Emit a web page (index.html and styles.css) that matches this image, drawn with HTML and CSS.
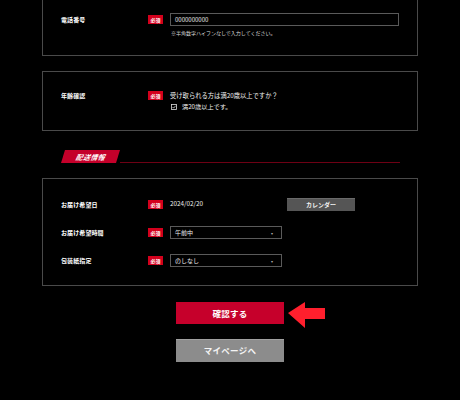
FILE: index.html
```html
<!DOCTYPE html>
<html lang="ja">
<head>
<meta charset="utf-8">
<link rel="stylesheet" href="styles.css">
</head>
<body>
<div class="page">
  <div class="box box-first">
    <div class="row">
      <div class="label">電話番号</div>
      <span class="badge">必須</span>
      <div class="field">
        <div class="input wide">0000000000</div>
        <div class="note">※半角数字ハイフンなしで入力してください。</div>
      </div>
    </div>
  </div>

  <div class="box box-age">
    <div class="row row-top">
      <div class="label">年齢確認</div>
      <span class="badge">必須</span>
      <div class="field">
        <div class="question">受け取られる方は満20歳以上ですか？</div>
        <div class="check"><span class="checkbox"><svg viewBox="0 0 6 6" width="6" height="6"><rect x="0.5" y="0.5" width="5" height="5" fill="none" stroke="#ddd" stroke-width="0.8"/><path d="M1.5 3 L2.6 4.1 L4.6 1.8" fill="none" stroke="#ddd" stroke-width="0.8"/></svg></span>満20歳以上です。</div>
      </div>
    </div>
  </div>

  <div class="section-head">
    <span class="tag"><span class="tag-text">配送情報</span></span>
    <span class="rule"></span>
  </div>

  <div class="box box-delivery">
    <div class="row">
      <div class="label">お届け希望日</div>
      <span class="badge">必須</span>
      <div class="field date-field">
        <span class="date">2024/02/20</span>
        <span class="cal-btn">カレンダー</span>
      </div>
    </div>
    <div class="row">
      <div class="label">お届け希望時間</div>
      <span class="badge">必須</span>
      <div class="field">
        <div class="select"><span>午前中</span><span class="caret">▾</span></div>
      </div>
    </div>
    <div class="row">
      <div class="label">包装紙指定</div>
      <span class="badge">必須</span>
      <div class="field">
        <div class="select"><span>のしなし</span><span class="caret">▾</span></div>
      </div>
    </div>
  </div>

  <div class="actions">
    <div class="confirm-wrap">
      <div class="btn btn-confirm">確認する</div>
      <svg class="arrow" viewBox="0 0 38 26" width="38" height="26"><polygon points="0,11 17,0 17,6 37,6 37,17 17,17 17,26" fill="#ff1f2d"/></svg>
    </div>
    <div class="btn btn-mypage">マイページへ</div>
  </div>
</div>
</body>
</html>
```

FILE: styles.css
```css
html, body {
  margin: 0;
  padding: 0;
  background: #000;
}
body {
  font-family: "Noto Sans CJK JP", "Noto Sans", sans-serif;
  color: #fff;
  width: 460px;
  height: 400px;
  overflow: hidden;
}
.page {
  width: 376px;
  margin: -21px auto 0;
}
.box {
  border: 1px solid #4a4a4a;
  box-sizing: border-box;
  padding: 0 18px;
}
.box-first {
  height: 77px;
  padding-top: 33px;
}
.box-age {
  margin-top: 15px;
  height: 60px;
  padding-top: 19px;
}
.box-delivery {
  margin-top: 15px;
  height: 108px;
  padding-top: 19px;
  display: flex;
  flex-direction: column;
  gap: 15px;
}
.row {
  display: grid;
  grid-template-columns: 87px 15px 1fr;
  align-items: start;
}
.field {
  padding-left: 7px;
}
.box-delivery .row {
  align-items: center;
  height: 13px;
}
.label {
  font-size: 6px;
  font-weight: 700;
  line-height: 13px;
  letter-spacing: 0.1px;
}
.box-age .label {
  line-height: 8px;
  padding-top: 1px;
}
.badge {
  display: block;
  width: 15px;
  height: 9px;
  margin-top: 2px;
  background: #d3001c;
  color: #fff;
  font-size: 5px;
  font-weight: 700;
  line-height: 9px;
  text-align: center;
}
.box-age .badge {
  margin-top: 0;
}
.box-delivery .badge {
  margin-top: 0;
}
.input {
  height: 13px;
  border: 1px solid #5a5a5a;
  box-sizing: border-box;
  background: #000;
  font-size: 6px;
  line-height: 11px;
  padding-left: 4px;
  color: #e8e8e8;
}
.wide {
  width: 229px;
}
.note {
  margin-top: 3px;
  font-size: 5px;
  line-height: 7px;
  color: #ddd;
  padding-left: 1px;
}
.question {
  font-size: 6.3px;
  line-height: 9px;
  color: #f0f0f0;
}
.check {
  margin-top: 2px;
  font-size: 6.2px;
  line-height: 9px;
  color: #f0f0f0;
  display: flex;
  align-items: center;
  gap: 5px;
  padding-left: 1px;
}
.checkbox {
  display: flex;
  width: 6px;
  height: 6px;
}
.section-head {
  margin-top: 19px;
  margin-left: 19px;
  margin-right: 18px;
  display: flex;
  align-items: flex-end;
  height: 13px;
}
.tag {
  display: flex;
  align-items: center;
  justify-content: center;
  width: 59px;
  height: 13px;
  background: #c4002a;
  clip-path: polygon(4px 0, 100% 0, calc(100% - 4px) 100%, 0 100%);
  flex: none;
}
.tag-text {
  font-size: 7px;
  font-weight: 700;
  font-style: italic;
  color: #fff;
  transform: skewX(-12deg);
  letter-spacing: 0.3px;
}
.rule {
  flex: 1;
  height: 1px;
  background: #6e0014;
}
.date-field {
  display: flex;
  align-items: center;
}
.date {
  font-size: 6.3px;
  color: #eee;
  width: 117px;
  line-height: 9px;
  margin-top: -3px;
}
.cal-btn {
  display: block;
  width: 68px;
  height: 13px;
  background: #555;
  border-top: 1px solid #6a6a6a;
  box-sizing: border-box;
  font-size: 6px;
  font-weight: 700;
  line-height: 12px;
  text-align: center;
  color: #f2f2f2;
}
.select {
  width: 112px;
  height: 13px;
  border: 1px solid #5a5a5a;
  box-sizing: border-box;
  display: flex;
  justify-content: space-between;
  align-items: center;
  padding: 0 8px 0 4px;
  font-size: 6px;
  color: #eee;
}
.caret {
  font-size: 4px;
  color: #aaa;
}
.actions {
  margin-top: 16px;
  display: flex;
  flex-direction: column;
  align-items: center;
  gap: 15px;
}
.confirm-wrap {
  position: relative;
}
.btn {
  width: 108px;
  height: 22px;
  box-sizing: border-box;
  font-size: 8.5px;
  font-weight: 700;
  line-height: 22px;
  text-align: center;
  letter-spacing: 0.3px;
}
.btn-confirm {
  background: #c6002b;
  color: #fff;
}
.btn-mypage {
  height: 23px;
  background: #8c8c8c;
  border-top: 1px solid #a0a0a0;
  line-height: 21px;
  color: #f4f4f4;
}
.arrow {
  position: absolute;
  left: 112px;
  top: 0;
}
```
